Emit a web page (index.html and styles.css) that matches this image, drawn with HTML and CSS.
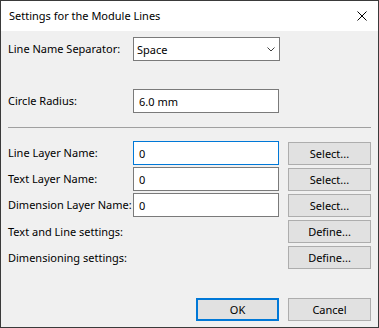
FILE: index.html
```html
<!DOCTYPE html>
<html>
<head>
<meta charset="utf-8">
<link rel="stylesheet" href="styles.css">
</head>
<body>
<div class="window">
  <div class="titlebar">
    <span class="title">Settings for the Module Lines</span>
    <svg class="close" width="10" height="10" viewBox="0 0 10 10"><path d="M0.5 0.5L9.5 9.5M9.5 0.5L0.5 9.5" stroke="#000" stroke-width="1" fill="none"/></svg>
  </div>
  <div class="body">
    <div class="row r-combo">
      <span class="label">Line Name Separator:</span>
      <div class="combo"><span>Space</span>
        <svg class="chev" width="8" height="5" viewBox="0 0 8 5"><path d="M0.5 0.5L4 4L7.5 0.5" stroke="#404040" stroke-width="1" fill="none"/></svg>
      </div>
    </div>
    <div class="row r-radius">
      <span class="label">Circle Radius:</span>
      <div class="field">6.0 mm</div>
    </div>
    <div class="sep"></div>
    <div class="row r-first">
      <span class="label">Line Layer Name:</span>
      <div class="field focus">0</div>
      <button class="btn">Select...</button>
    </div>
    <div class="row r-next">
      <span class="label">Text Layer Name:</span>
      <div class="field">0</div>
      <button class="btn">Select...</button>
    </div>
    <div class="row r-next">
      <span class="label">Dimension Layer Name:</span>
      <div class="field">0</div>
      <button class="btn">Select...</button>
    </div>
    <div class="row r-def1">
      <span class="label">Text and Line settings:</span>
      <button class="btn">Define...</button>
    </div>
    <div class="row r-def2">
      <span class="label">Dimensioning settings:</span>
      <button class="btn">Define...</button>
    </div>
    <div class="row r-actions">
      <button class="btn ok">OK</button>
      <button class="btn">Cancel</button>
    </div>
  </div>
</div>
</body>
</html>
```
FILE: styles.css
```css
html, body {
  margin: 0;
  padding: 0;
  background: #3a3a3a;
}
body {
  font-family: "Noto Sans", "Open Sans", sans-serif;
  font-size: 11px;
  color: #000;
}
.window {
  width: 377px;
  height: 326px;
  border: 1px solid #3a3a3a;
  background: #f0f0f0;
  display: flex;
  flex-direction: column;
}
.titlebar {
  height: 30px;
  background: #fff;
  display: flex;
  align-items: center;
  justify-content: space-between;
  padding: 0 11px 0 8px;
  flex: none;
}
.title {
  font-size: 11px;
  padding-bottom: 1px;
}
.close {
  display: block;
}
.body {
  flex: 1;
  padding: 6px 7px 0 7px;
  display: flex;
  flex-direction: column;
}
.row {
  display: flex;
  align-items: center;
  height: 24px;
}
.label {
  width: 125px;
  flex: none;
  white-space: nowrap;
  line-height: 14px;
}
.combo, .field {
  box-sizing: border-box;
  width: 146px;
  height: 24px;
  background: #fff;
  border: 1px solid #7a7a7a;
  display: flex;
  align-items: center;
  flex: none;
}
.combo {
  width: 147px;
  padding: 0 4px 0 3px;
  justify-content: space-between;
}
.field {
  padding-left: 5px;
}
.field.focus {
  border-color: #0078d7;
}
.chev {
  display: block;
}
.btn {
  box-sizing: border-box;
  width: 83px;
  height: 23px;
  background: #e1e1e1;
  border: 1px solid #adadad;
  font: inherit;
  color: #000;
  padding: 0;
  margin: 0;
  flex: none;
}
.row .field + .btn {
  margin-left: 9px;
  align-self: flex-start;
  margin-top: 1px;
}
.r-radius { margin-top: 28px; }
.sep {
  height: 1px;
  background: #a0a0a0;
  margin: 14px 0 13px 0;
  flex: none;
}
.r-next { margin-top: 2px; }
.r-def1, .r-def2 { height: 23px; justify-content: flex-start; }
.r-def1 { margin-top: 3px; }
.r-def2 { margin-top: 3px; }
.r-def1 .btn, .r-def2 .btn { margin-left: 155px; }
.r-actions {
  margin-top: 29px;
  height: 23px;
  justify-content: flex-end;
  gap: 9px;
}
.btn.ok {
  border: 2px solid #0078d7;
}
```
